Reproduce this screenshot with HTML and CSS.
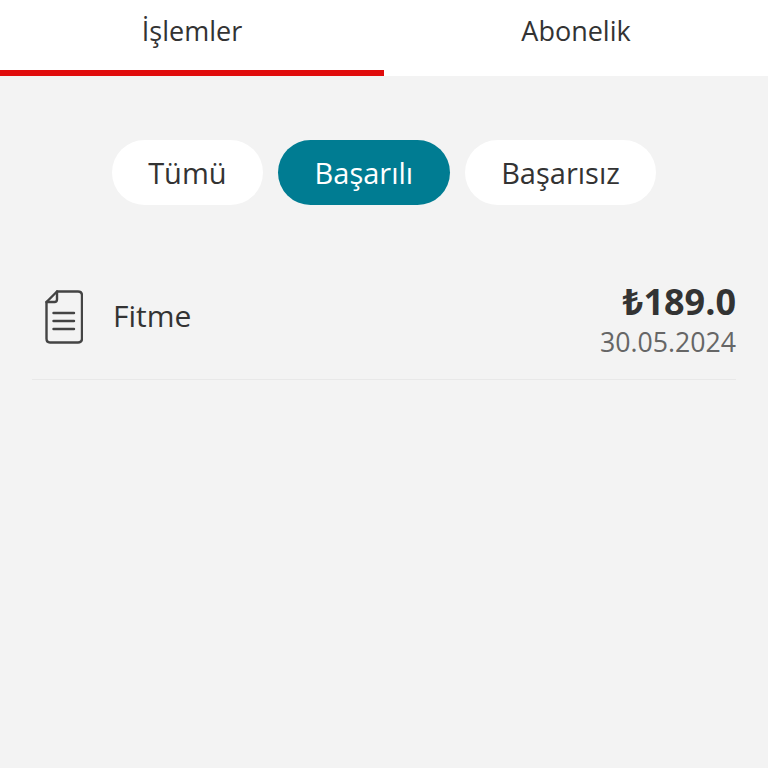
FILE: index.html
```html
<!DOCTYPE html>
<html lang="tr">
<head>
    <meta charset="UTF-8">
    <meta name="viewport" content="width=device-width, initial-scale=1.0">
    <title>İşlemler</title>
    <link rel="stylesheet" href="styles.css">
</head>
<body>
    <!-- Sekmeler -->
    <div class="tabs">
        <div class="tab tab-active">İşlemler</div>
        <div class="tab">Abonelik</div>
    </div>

    <!-- Filtreler -->
    <div class="filters">
        <div class="pill">Tümü</div>
        <div class="pill pill-active">Başarılı</div>
        <div class="pill">Başarısız</div>
    </div>

    <!-- Liste -->
    <div class="list">
        <div class="row">
            <svg class="row-icon" width="38" height="54" viewBox="0 0 38 54" fill="none" stroke="#444" stroke-width="2.4" stroke-linejoin="round" stroke-linecap="round">
                <path d="M12 1.500H33Q37 1.500 37 5.500V48.500Q37 52.500 33 52.500H5Q1.500 52.500 1.500 48.500V12Z"/>
                <path d="M12 1.500V9.500Q12 12 9.500 12H1.500"/>
                <path d="M8.500 23H29M8.500 31H29M8.500 39H29"/>
            </svg>
            <div class="row-title">Fitme</div>
            <div class="row-right">
                <div class="amount">₺189.0</div>
                <div class="date">30.05.2024</div>
            </div>
        </div>
    </div>
</body>
</html>
```

FILE: styles.css
```css
body {
    margin: 0;
    height: 768px;
    overflow: hidden;
    font-family: "Open Sans", "Noto Sans", sans-serif;
    background-color: #f3f3f3;
    color: #333;
}
.tabs {
    display: flex;
    height: 76px;
    background-color: #fff;
}
.tab {
    flex: 1;
    box-sizing: border-box;
    height: 76px;
    padding-top: 11px;
    text-align: center;
    font-size: 27px;
    line-height: 40px;
}
.tab-active {
    border-bottom: 6px solid #e00c0c;
}
.filters {
    display: flex;
    justify-content: center;
    gap: 15px;
    margin-top: 64px;
}
.pill {
    height: 65px;
    border-radius: 33px;
    background-color: #fff;
    padding: 0 36.5px;
    font-size: 29px;
    line-height: 65px;
}
.pill-active {
    background-color: #007c92;
    color: #fff;
}
.list {
    margin: 65px 32px 0;
}
.row {
    display: flex;
    align-items: center;
    box-sizing: border-box;
    height: 110px;
    padding-bottom: 10px;
    border-bottom: 1px solid #e8e8e8;
}
.row-icon {
    margin-left: 13px;
    margin-top: -5px;
}
.row-title {
    flex: 1;
    margin-left: 30px;
    margin-bottom: 8px;
    font-size: 30px;
}
.row-right {
    text-align: right;
}
.amount {
    font-size: 36px;
    font-weight: 700;
    line-height: 44px;
}
.date {
    font-size: 26.7px;
    line-height: 36px;
    color: #666;
}
```
